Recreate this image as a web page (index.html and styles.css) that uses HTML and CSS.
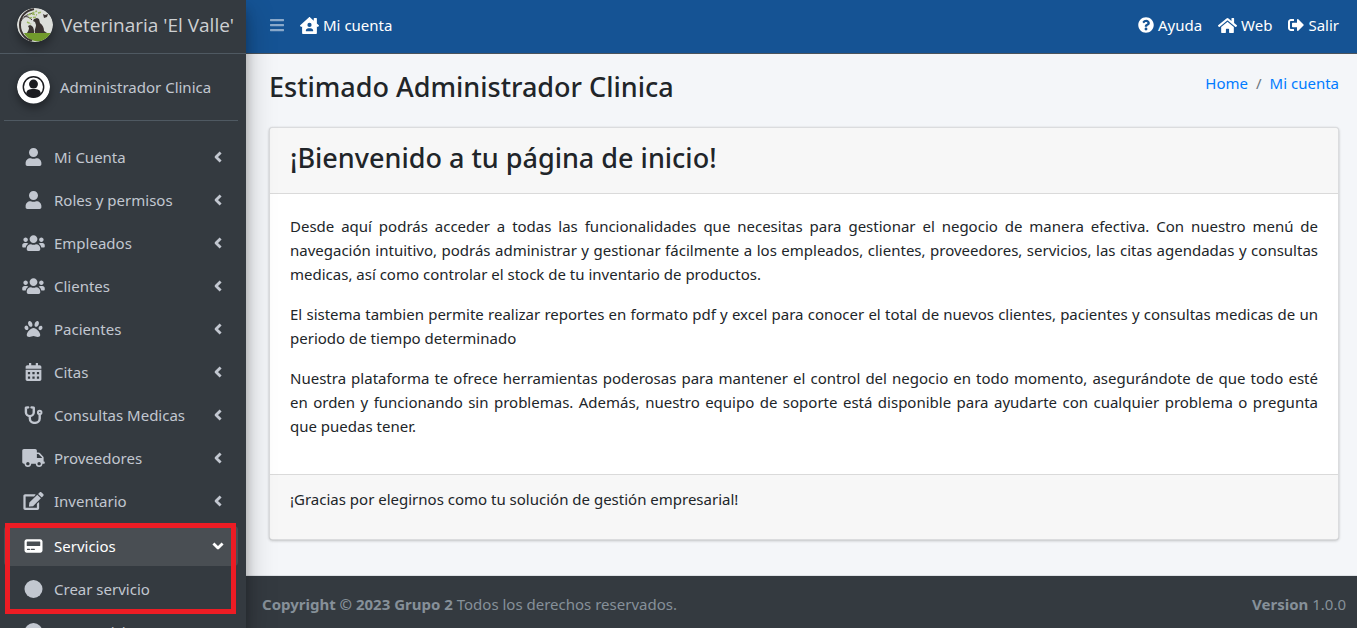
FILE: index.html
```html
<!DOCTYPE html>
<html lang="es">
<head>
<meta charset="utf-8">
<meta name="viewport" content="width=device-width, initial-scale=1">
<title>Veterinaria 'El Valle'</title>
<link rel="stylesheet" href="styles.css">
</head>
<body>
<svg class="sprite" aria-hidden="true">
  <symbol id="user" viewBox="0 0 448 512"><path d="M224 256c70.7 0 128-57.3 128-128S294.7 0 224 0 96 57.3 96 128s57.3 128 128 128zm89.6 32h-16.7c-22.2 10.2-46.9 16-72.9 16s-50.6-5.8-72.9-16h-16.7C60.2 288 0 348.2 0 422.4V464c0 26.5 21.5 48 48 48h352c26.5 0 48-21.5 48-48v-41.6c0-74.2-60.2-134.4-134.4-134.4z"/></symbol>
  <symbol id="users" viewBox="0 0 640 512"><path d="M96 224c35.3 0 64-28.7 64-64s-28.7-64-64-64-64 28.7-64 64 28.7 64 64 64zm448 0c35.3 0 64-28.7 64-64s-28.7-64-64-64-64 28.7-64 64 28.7 64 64 64zm32 32h-64c-17.6 0-33.5 7.1-45.1 18.6 40.3 22.1 68.9 62 75.1 109.4h66c17.7 0 32-14.3 32-32v-32c0-35.3-28.7-64-64-64zm-256 0c61.9 0 112-50.1 112-112S381.9 32 320 32 208 82.1 208 144s50.1 112 112 112zm76.8 32h-8.3c-20.8 10-43.9 16-68.5 16s-47.6-6-68.5-16h-8.3C179.6 288 128 339.6 128 403.2V432c0 26.5 21.5 48 48 48h288c26.5 0 48-21.5 48-48v-28.8c0-63.6-51.6-115.2-115.2-115.2zm-223.7-13.4C161.5 263.1 145.6 256 128 256H64c-35.3 0-64 28.7-64 64v32c0 17.7 14.3 32 32 32h65.9c6.3-47.4 34.9-87.3 75.2-109.4z"/></symbol>
  <symbol id="paw" viewBox="0 0 512 512"><path d="M256 224c-79.41 0-192 122.76-192 200.25 0 34.9 26.81 55.75 71.74 55.75 48.84 0 81.09-25.08 120.26-25.08 39.51 0 71.85 25.08 120.26 25.08 44.93 0 71.74-20.85 71.74-55.75C448 346.76 335.41 224 256 224zm-147.28-12.61c-10.4-34.65-42.44-57.09-71.56-50.13-29.12 6.96-44.29 40.69-33.89 75.34 10.4 34.65 42.44 57.09 71.56 50.13 29.12-6.96 44.29-40.69 33.89-75.34zm84.72-20.78c30.94-8.14 42.94-50.25 26.8-94.08-16.14-43.82-54.31-72.75-85.25-64.61s-42.94 50.25-26.8 94.08c16.14 43.83 54.31 72.76 85.25 64.61zm281.39-29.34c-29.12-6.96-61.15 15.48-71.56 50.13-10.4 34.65 4.77 68.38 33.89 75.34 29.12 6.96 61.15-15.48 71.56-50.13 10.4-34.65-4.77-68.38-33.89-75.34zm-156.27 29.34c30.94 8.14 69.11-20.78 85.25-64.61 16.14-43.82 4.14-85.94-26.8-94.08-30.94-8.14-69.11 20.78-85.25 64.61-16.14 43.82-4.14 85.94 26.8 94.08z"/></symbol>
  <symbol id="calendar" viewBox="0 0 448 512"><path fill-rule="evenodd" d="M0 192h448v272c0 26-22 48-48 48H48c-26 0-48-22-48-48V192zm64 64v64h64v-64H64zm128 0v64h64v-64h-64zm128 0v64h64v-64h-64zM64 384v64h64v-64H64zm128 0v64h64v-64h-64zm128 0v64h64v-64h-64zM448 160H0v-48c0-26 22-48 48-48h48V12c0-7 5-12 12-12h40c7 0 12 5 12 12v52h128V12c0-7 5-12 12-12h40c7 0 12 5 12 12v52h48c26 0 48 22 48 48v48z"/></symbol>
  <symbol id="stethoscope" viewBox="0 0 512 512"><path fill="none" stroke="currentColor" stroke-width="68" stroke-linecap="round" stroke-linejoin="round" d="M104 38L40 50v126c0 64 50 112 112 112s112-48 112-112V50l-64-12M152 288v64c0 72 56 128 136 128s144-56 144-128V224"/><circle cx="432" cy="184" r="50" fill="none" stroke="currentColor" stroke-width="56"/></symbol>
  <symbol id="truck" viewBox="0 0 640 512"><path d="M624 352h-16V243.9c0-12.7-5.1-24.9-14.1-33.9L494 110.1c-9-9-21.2-14.1-33.9-14.1H416V48c0-26.5-21.5-48-48-48H48C21.5 0 0 21.5 0 48v320c0 26.5 21.5 48 48 48h16c0 53 43 96 96 96s96-43 96-96h128c0 53 43 96 96 96s96-43 96-96h48c8.8 0 16-7.2 16-16v-32c0-8.8-7.2-16-16-16zM160 464c-26.5 0-48-21.5-48-48s21.5-48 48-48 48 21.5 48 48-21.5 48-48 48zm320 0c-26.5 0-48-21.5-48-48s21.5-48 48-48 48 21.5 48 48-21.5 48-48 48zm80-208H416V144h44.1l99.9 99.9V256z"/></symbol>
  <symbol id="edit" viewBox="0 0 576 512"><path d="M402.6 83.2l90.2 90.2c3.8 3.8 3.8 10 0 13.8L274.4 405.6l-92.8 10.3c-12.4 1.4-22.9-9.1-21.5-21.5l10.3-92.8L388.8 83.2c3.8-3.8 10-3.8 13.8 0zm162-22.9l-48.8-48.8c-15.2-15.2-39.9-15.2-55.2 0l-35.4 35.4c-3.8 3.8-3.8 10 0 13.8l90.2 90.2c3.8 3.8 10 3.8 13.8 0l35.4-35.4c15.2-15.3 15.2-40 0-55.2zM384 346.2V448H64V128h229.8c3.2 0 6.2-1.3 8.5-3.5l40-40c7.6-7.6 2.2-20.5-8.5-20.5H48C21.5 64 0 85.5 0 112v352c0 26.5 21.5 48 48 48h352c26.5 0 48-21.5 48-48V306.2c0-10.7-12.9-16-20.5-8.5l-40 40c-2.2 2.3-3.5 5.3-3.5 8.5z"/></symbol>
  <symbol id="card" viewBox="0 0 512 512"><path fill-rule="evenodd" d="M64 64h384c35 0 64 29 64 64v256c0 35-29 64-64 64H64c-35 0-64-29-64-64V128c0-35 29-64 64-64zm16 64c-9 0-16 7-16 16v96c0 9 7 16 16 16h352c9 0 16-7 16-16v-96c0-9-7-16-16-16H80zM84 336a16 16 0 0 0 0 32h56a16 16 0 0 0 0-32H84zm108 0a16 16 0 0 0 0 32h88a16 16 0 0 0 0-32h-88z"/></symbol>
  <symbol id="circle" viewBox="0 0 512 512"><circle cx="256" cy="256" r="256"/></symbol>
  <symbol id="angle" viewBox="0 0 256 512"><path fill="none" stroke="currentColor" stroke-width="80" stroke-linejoin="round" stroke-linecap="square" d="M174 154L72 256l102 102"/></symbol>
  <symbol id="bars" viewBox="0 0 448 512"><path d="M16 132h416c9 0 16-7 16-16V76c0-9-7-16-16-16H16C7 60 0 67 0 76v40c0 9 7 16 16 16zm0 160h416c9 0 16-7 16-16v-40c0-9-7-16-16-16H16c-9 0-16 7-16 16v40c0 9 7 16 16 16zm0 160h416c9 0 16-7 16-16v-40c0-9-7-16-16-16H16c-9 0-16 7-16 16v40c0 9 7 16 16 16z"/></symbol>
  <symbol id="house-user" viewBox="0 0 576 512"><path fill-rule="evenodd" d="M570 248L512 197V48c0-9-7-16-16-16h-64c-9 0-16 7-16 16v65L309 10c-12-11-30-11-42 0L6 248c-7 6-8 16-2 23l22 24c6 7 16 7 23 2l15-14v197c0 18 14 32 32 32h384c18 0 32-14 32-32V283l15 14c7 6 17 5 23-2l22-24c6-7 5-17-2-23zM288 176a64 64 0 1 1 0 128 64 64 0 0 1 0-128zm-32 160h64c44 0 80 36 80 80 0 9-7 16-16 16H192c-9 0-16-7-16-16 0-44 36-80 80-80z"/></symbol>
  <symbol id="question" viewBox="0 0 512 512"><path d="M504 256c0 136.997-111.043 248-248 248S8 392.997 8 256C8 119.083 119.043 8 256 8s248 111.083 248 248zM262.655 90c-54.497 0-89.255 22.957-116.549 63.758-3.536 5.286-2.353 12.415 2.715 16.258l34.699 26.31c5.205 3.947 12.621 3.008 16.665-2.122 17.864-22.658 30.113-35.797 57.303-35.797 20.429 0 45.698 13.148 45.698 32.958 0 14.976-12.363 22.667-32.534 33.976C247.128 238.528 216 254.941 216 296v4c0 6.627 5.373 12 12 12h56c6.627 0 12-5.373 12-12v-1.333c0-28.462 83.186-29.647 83.186-106.667 0-58.002-60.165-102-116.531-102zM256 338c-25.365 0-46 20.635-46 46 0 25.364 20.635 46 46 46s46-20.636 46-46c0-25.365-20.635-46-46-46z"/></symbol>
  <symbol id="home" viewBox="0 0 576 512"><path d="M280.37 148.26L96 300.11V464a16 16 0 0 0 16 16l112.06-.29a16 16 0 0 0 15.92-16V368a16 16 0 0 1 16-16h64a16 16 0 0 1 16 16v95.64a16 16 0 0 0 16 16.05L464 480a16 16 0 0 0 16-16V300L295.67 148.26a12.19 12.19 0 0 0-15.3 0zM571.6 251.47L488 182.56V44.05a12 12 0 0 0-12-12h-56a12 12 0 0 0-12 12v72.61L318.47 43a48 48 0 0 0-61 0L4.34 251.47a12 12 0 0 0-1.6 16.9l25.5 31A12 12 0 0 0 45.15 301l235.22-193.74a12.19 12.19 0 0 1 15.3 0L530.9 301a12 12 0 0 0 16.9-1.6l25.5-31a12 12 0 0 0-1.7-16.93z"/></symbol>
  <symbol id="exit" viewBox="0 0 512 512"><path d="M497 273L329 441c-15 15-41 4.5-41-17v-96H152c-13.3 0-24-10.7-24-24v-96c0-13.3 10.7-24 24-24h136V88c0-21.4 25.9-32 41-17l168 168c9.3 9.4 9.3 24.6 0 34zM192 436v-40c0-6.6-5.4-12-12-12H96c-17.7 0-32-14.3-32-32V160c0-17.7 14.3-32 32-32h84c6.6 0 12-5.4 12-12V76c0-6.6-5.4-12-12-12H96c-53 0-96 43-96 96v192c0 53 43 96 96 96h84c6.6 0 12-5.4 12-12z"/></symbol>
</svg>
<div class="layout">
  <aside class="sidebar">
    <a class="brand" href="#">
      <svg class="brand-logo" viewBox="0 0 36 34" aria-hidden="true">
        <clipPath id="disc"><ellipse cx="18" cy="17" rx="18" ry="17"/></clipPath>
        <g clip-path="url(#disc)">
          <path fill="#dcdeda" d="M0 0h36v34H0z"/>
          <path fill="#719a2c" d="M7 25h29v6c-6 3-12 3-18 2-5-1-9-4-11-8z"/>
          <path fill="none" stroke="#3a3331" stroke-width="2" d="M17 1C8 3 3 9 3 17s5 14 12 16"/>
          <path fill="none" stroke="#3a3331" d="M4 13c3-5 7-7 13-8M7 9c3-1 5 0 8 3"/>
          <path fill="none" stroke="#9db763" stroke-width="1.500" stroke-dasharray="3 1" d="M11 7l9-4M12 10l8-1M21 5l4-1M10 14l4 2M15 6l5 1"/>
          <path fill="#3a3331" d="M18 25c-1-3 1-5 1-8l-1-3-2-1 1-2 3-1 2 1 1 4c3 2 4 5 4 8l3 2zM10 25c1-2 2-3 2-5l-1-2 2-1 2 1c2 2 2 4 2 7zM26 6l2 1 3-1-1 3-3 1z"/>
        </g>
      </svg>
      <span>Veterinaria 'El Valle'</span>
    </a>
    <a class="profile" href="#">
      <svg class="avatar" viewBox="0 0 34 34" aria-hidden="true"><circle cx="17" cy="17" r="17" fill="#fff"/><circle cx="17" cy="17" r="10.500" fill="none" stroke="#1b1c20" stroke-width="1.500"/><circle cx="17" cy="14" r="4.600" fill="#1b1c20"/><path fill="#1b1c20" d="M9.500 24c0-4 3-5 7.500-5s7.500 1 7.500 5c-4 5-11 5-15 0z"/></svg>
      <span>Administrador Clinica</span>
    </a>
    <nav class="menu">
      <a class="item" href="#"><svg class="icon"><use href="#user"/></svg><span>Mi Cuenta</span><svg class="arrow"><use href="#angle"/></svg></a>
      <a class="item" href="#"><svg class="icon"><use href="#user"/></svg><span>Roles y permisos</span><svg class="arrow"><use href="#angle"/></svg></a>
      <a class="item" href="#"><svg class="icon"><use href="#users"/></svg><span>Empleados</span><svg class="arrow"><use href="#angle"/></svg></a>
      <a class="item" href="#"><svg class="icon"><use href="#users"/></svg><span>Clientes</span><svg class="arrow"><use href="#angle"/></svg></a>
      <a class="item" href="#"><svg class="icon"><use href="#paw"/></svg><span>Pacientes</span><svg class="arrow"><use href="#angle"/></svg></a>
      <a class="item" href="#"><svg class="icon"><use href="#calendar"/></svg><span>Citas</span><svg class="arrow"><use href="#angle"/></svg></a>
      <a class="item" href="#"><svg class="icon"><use href="#stethoscope"/></svg><span>Consultas Medicas</span><svg class="arrow"><use href="#angle"/></svg></a>
      <a class="item" href="#"><svg class="icon"><use href="#truck"/></svg><span>Proveedores</span><svg class="arrow"><use href="#angle"/></svg></a>
      <a class="item" href="#"><svg class="icon"><use href="#edit"/></svg><span>Inventario</span><svg class="arrow"><use href="#angle"/></svg></a>
      <div class="highlight">
        <a class="item active" href="#"><svg class="icon"><use href="#card"/></svg><span>Servicios</span><svg class="arrow open"><use href="#angle"/></svg></a>
        <a class="item" href="#"><svg class="icon"><use href="#circle"/></svg><span>Crear servicio</span></a>
      </div>
      <a class="item" href="#"><svg class="icon"><use href="#circle"/></svg><span>Ver servicios</span></a>
    </nav>
  </aside>
  <div class="page">
    <header class="topbar">
      <button class="toggle" type="button" aria-label="Menú"><svg class="glyph"><use href="#bars"/></svg></button>
      <a class="toplink" href="#"><svg class="glyph wide"><use href="#house-user"/></svg>Mi cuenta</a>
      <nav class="actions">
        <a class="toplink" href="#"><svg class="glyph"><use href="#question"/></svg>Ayuda</a>
        <a class="toplink" href="#"><svg class="glyph wide"><use href="#home"/></svg>Web</a>
        <a class="toplink" href="#"><svg class="glyph"><use href="#exit"/></svg>Salir</a>
      </nav>
    </header>
    <main class="content">
      <div class="heading">
        <h1>Estimado Administrador Clinica</h1>
        <nav class="crumbs"><a href="#">Home</a><span>/</span><a href="#">Mi cuenta</a></nav>
      </div>
      <section class="card">
        <div class="card-header"><h2>¡Bienvenido a tu página de inicio!</h2></div>
        <div class="card-body">
          <p>Desde aquí podrás acceder a todas las funcionalidades que necesitas para gestionar el negocio de manera efectiva. Con nuestro menú de navegación intuitivo, podrás administrar y gestionar fácilmente a los empleados, clientes, proveedores, servicios, las citas agendadas y consultas medicas, así como controlar el stock de tu inventario de productos.</p>
          <p>El sistema tambien permite realizar reportes en formato pdf y excel para conocer el total de nuevos clientes, pacientes y consultas medicas de un periodo de tiempo determinado</p>
          <p>Nuestra plataforma te ofrece herramientas poderosas para mantener el control del negocio en todo momento, asegurándote de que todo esté en&nbsp;orden y funcionando sin problemas. Además, nuestro equipo de soporte está disponible para ayudarte con cualquier problema o pregunta que&nbsp;puedas tener.</p>
        </div>
        <div class="card-footer"><p>¡Gracias por elegirnos como tu solución de gestión empresarial!</p></div>
      </section>
    </main>
    <footer class="footer">
      <div><strong>Copyright © 2023 Grupo 2</strong> Todos los derechos reservados.</div>
      <div><strong>Version</strong> 1.0.0</div>
    </footer>
  </div>
</div>
</body>
</html>
```
FILE: styles.css
```css
* { box-sizing: border-box; }
body { margin: 0; font: 15px/24px "Noto Sans", "Open Sans", sans-serif; color: #212529; background: #f4f6f9; }
a { color: inherit; text-decoration: none; }
h1, h2, p { margin: 0; }
svg { fill: currentColor; }
.sprite { position: absolute; width: 0; height: 0; }
.layout { display: flex; height: 100vh; overflow: hidden; }

.sidebar { position: relative; z-index: 2; flex: 0 0 246px; background: #343a40; color: #c2c7d0; box-shadow: 0 14px 28px rgba(0,0,0,.25), 0 10px 10px rgba(0,0,0,.22); overflow: hidden; }
.brand { display: flex; align-items: center; gap: 8px; height: 54px; padding: 0 17px 4px; border-bottom: 1px solid #4f5962; font-family: "Open Sans", sans-serif; font-size: 19px; color: #ced0d2; white-space: nowrap; }
.brand-logo { flex: none; width: 36px; height: 34px; border-radius: 50%; box-shadow: 0 6px 8px rgba(0,0,0,.3); }
.profile { display: flex; align-items: center; gap: 10px; height: 67px; margin: 0 8px 0 4px; padding: 0 13px; border-bottom: 1px solid #4f5962; white-space: nowrap; }
.avatar { flex: none; width: 33px; height: 34px; border-radius: 50%; box-shadow: 0 4px 8px rgba(0,0,0,.4); }
.menu { display: flex; flex-direction: column; gap: 3px; padding: 16px 8px 0 4px; }
.item { display: flex; align-items: center; gap: 8px; height: 40px; padding: 0 15px 0 17px; border-radius: 4px; white-space: nowrap; }
.icon { flex: none; width: 25px; height: 18px; }
.arrow { width: 10px; height: 18px; margin-left: auto; }
.open { transform: rotate(-90deg); }
.active { background: #494e53; color: #fff; }
.highlight { position: relative; display: flex; flex-direction: column; gap: 3px; margin-top: 2px; }
.highlight::after { content: ""; position: absolute; inset: -3px 2px -5px 1px; border: 5px solid #ed1c24; pointer-events: none; }

.page { display: flex; flex: 1; flex-direction: column; min-width: 0; }
.topbar { display: flex; align-items: center; height: 54px; padding: 0 18px 3px 23px; background: #155394; border-bottom: 1px solid #4b545c; color: #fff; }
.toggle { display: flex; margin: 0 15px 0 0; padding: 0; border: 0; background: none; color: #8aa9ca; }
.glyph { flex: none; width: 16px; height: 16px; }
.wide { width: 19px; height: 17px; }
.toplink { display: flex; align-items: center; gap: 4px; }
.actions { display: flex; gap: 16px; margin-left: auto; }
.content { flex: 1; padding: 15px 18px 0 23px; }
.heading { display: flex; justify-content: space-between; height: 58px; }
h1, h2 { font-size: 27px; line-height: 36px; font-weight: 500; }
.crumbs { display: flex; gap: 8px; padding-top: 2px; color: #6c757d; }
.crumbs a { color: #007bff; }
.card { background: #fff; border: 1px solid #dbdcde; border-radius: 4px; box-shadow: 0 0 1px rgba(0,0,0,.13), 0 1px 3px rgba(0,0,0,.2); overflow: hidden; }
.card-header { padding: 12px 20px 17px; background: #f7f7f7; border-bottom: 1px solid #dadada; }
.card-body { padding: 20px; text-align: justify; }
.card-body p { margin-bottom: 16px; }
.card-footer { padding: 12px 20px 28px; background: #f7f7f7; border-top: 1px solid #dadada; }
.footer { display: flex; justify-content: space-between; padding: 16px 11px 12px 16px; background: #343a40; border-top: 1px solid #dee2e6; color: #869099; }
```
